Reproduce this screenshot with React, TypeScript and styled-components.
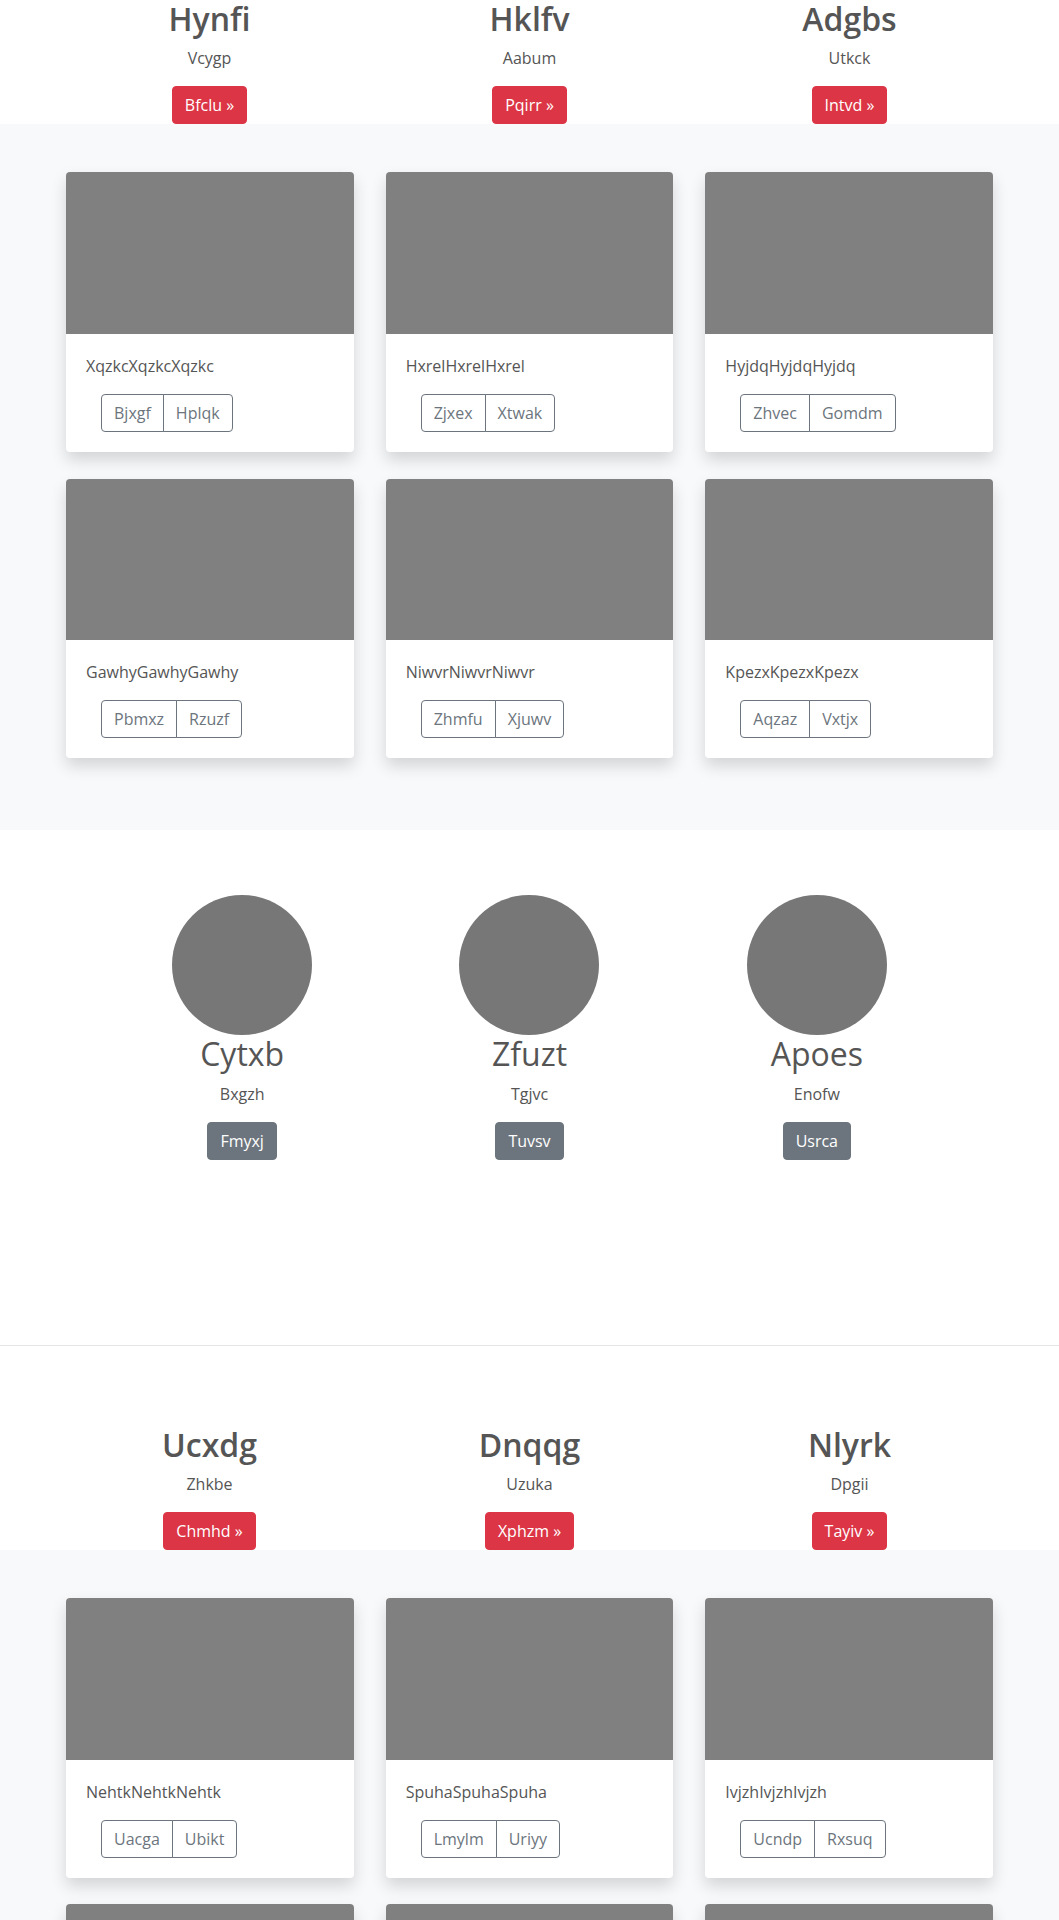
import React from "react";
import styled, { createGlobalStyle } from "styled-components";

const GlobalStyle = createGlobalStyle`
  html, body { margin: 0; padding: 0; background: #fff; }
  body {
    font-family: "Segoe UI", "Open Sans", "Noto Sans", sans-serif;
    font-size: 16px;
    line-height: 1.5;
    color: #555;
  }
  * { box-sizing: border-box; }
`;

const Container = styled.div<{ $width?: number }>`
  width: ${(p) => p.$width ?? 960}px;
  margin: 0 auto;
`;

const ThreeCols = styled.div<{ $gap?: number }>`
  display: grid;
  grid-template-columns: repeat(3, 1fr);
  column-gap: ${(p) => p.$gap ?? 0}px;
`;

const FeatureSection = styled.section<{ $top?: number }>`
  padding-top: ${(p) => p.$top ?? 0}px;
`;

const FeatureCol = styled.div`
  text-align: center;
`;

const FeatureTitle = styled.h2`
  margin: 0 0 8px;
  font-size: 32px;
  line-height: 1.2;
  font-weight: 600;
  color: #555;
`;

const Text = styled.p`
  margin: 0 0 16px;
  font-size: 16px;
  line-height: 24px;
  color: #555;
`;

const Button = styled.button<{ $variant: "danger" | "secondary" }>`
  display: inline-block;
  height: 38px;
  padding: 6px 12px;
  font-family: inherit;
  font-size: 16px;
  line-height: 24px;
  border-radius: 4px;
  border: 1px solid ${(p) => (p.$variant === "danger" ? "#dc3545" : "#6c757d")};
  background: ${(p) => (p.$variant === "danger" ? "#dc3545" : "#6c757d")};
  color: #fff;
  cursor: pointer;
  vertical-align: top;
`;

const Album = styled.section`
  background: #f8f9fa;
  padding: 48px 0 72px;
`;

const CardGrid = styled.div`
  display: grid;
  grid-template-columns: repeat(3, 1fr);
  column-gap: 32px;
  row-gap: 26.3px;
  padding: 0 16.5px;
`;

const Card = styled.div`
  background: #fff;
  border-radius: 4px;
  overflow: hidden;
  box-shadow: 0 8px 16px rgba(0, 0, 0, 0.15);
`;

const CardImage = styled.div`
  width: 100%;
  aspect-ratio: 16 / 9;
  background: #808080;
`;

const CardBody = styled.div`
  padding: 20px;
`;

const CardText = styled.p`
  margin: 0 0 16px;
  font-size: 16px;
  line-height: 24px;
  color: #555;
`;

const BtnGroup = styled.div`
  display: inline-flex;
  margin-left: 15px;
`;

const OutlineButton = styled.button`
  height: 38px;
  padding: 6px 12px;
  font-family: inherit;
  font-size: 16px;
  line-height: 24px;
  color: #6c757d;
  background: transparent;
  border: 1px solid #6c757d;
  cursor: pointer;
  &:first-child {
    border-radius: 4px 0 0 4px;
  }
  & + & {
    margin-left: -1px;
    border-radius: 0 4px 4px 0;
  }
`;

const Team = styled.section`
  padding: 65px 0 185px;
`;

const TeamCol = styled.div`
  display: flex;
  flex-direction: column;
  align-items: center;
  text-align: center;
`;

const Avatar = styled.div`
  width: 140px;
  height: 140px;
  border-radius: 50%;
  background: #777;
`;

const TeamName = styled.h2`
  margin: 0 0 8px;
  font-size: 32px;
  line-height: 1.2;
  font-weight: 400;
  color: #555;
`;

const Divider = styled.hr`
  margin: 0;
  border: 0;
  border-top: 1px solid rgba(0, 0, 0, 0.1);
`;

type Feature = { title: string; sub: string; btn: string };
type CardData = { text: string; a: string; b: string };

const features1: Feature[] = [
  { title: "Hynfi", sub: "Vcygp", btn: "Bfclu »" },
  { title: "Hklfv", sub: "Aabum", btn: "Pqirr »" },
  { title: "Adgbs", sub: "Utkck", btn: "Intvd »" },
];

const features2: Feature[] = [
  { title: "Ucxdg", sub: "Zhkbe", btn: "Chmhd »" },
  { title: "Dnqqg", sub: "Uzuka", btn: "Xphzm »" },
  { title: "Nlyrk", sub: "Dpgii", btn: "Tayiv »" },
];

const cards1: CardData[] = [
  { text: "XqzkcXqzkcXqzkc", a: "Bjxgf", b: "Hplqk" },
  { text: "HxrelHxrelHxrel", a: "Zjxex", b: "Xtwak" },
  { text: "HyjdqHyjdqHyjdq", a: "Zhvec", b: "Gomdm" },
  { text: "GawhyGawhyGawhy", a: "Pbmxz", b: "Rzuzf" },
  { text: "NiwvrNiwvrNiwvr", a: "Zhmfu", b: "Xjuwv" },
  { text: "KpezxKpezxKpezx", a: "Aqzaz", b: "Vxtjx" },
];

const cards2: CardData[] = [
  { text: "NehtkNehtkNehtk", a: "Uacga", b: "Ubikt" },
  { text: "SpuhaSpuhaSpuha", a: "Lmylm", b: "Uriyy" },
  { text: "IvjzhIvjzhIvjzh", a: "Ucndp", b: "Rxsuq" },
  { text: "WobreWobreWobre", a: "Kfuts", b: "Lqemo" },
  { text: "DaxinDaxinDaxin", a: "Pyvor", b: "Hiwse" },
  { text: "TumolTumolTumol", a: "Sgebn", b: "Ozrak" },
];

const team = [
  { name: "Cytxb", sub: "Bxgzh", btn: "Fmyxj" },
  { name: "Zfuzt", sub: "Tgjvc", btn: "Tuvsv" },
  { name: "Apoes", sub: "Enofw", btn: "Usrca" },
];

function Features({ items, top }: { items: Feature[]; top?: number }) {
  return (
    <FeatureSection $top={top}>
      <Container>
        <ThreeCols>
          {items.map((f) => (
            <FeatureCol key={f.title}>
              <FeatureTitle>{f.title}</FeatureTitle>
              <Text>{f.sub}</Text>
              <Button $variant="danger">{f.btn}</Button>
            </FeatureCol>
          ))}
        </ThreeCols>
      </Container>
    </FeatureSection>
  );
}

function Cards({ items }: { items: CardData[] }) {
  return (
    <Album>
      <Container>
        <CardGrid>
          {items.map((c) => (
            <Card key={c.text}>
              <CardImage />
              <CardBody>
                <CardText>{c.text}</CardText>
                <BtnGroup>
                  <OutlineButton>{c.a}</OutlineButton>
                  <OutlineButton>{c.b}</OutlineButton>
                </BtnGroup>
              </CardBody>
            </Card>
          ))}
        </CardGrid>
      </Container>
    </Album>
  );
}

export default function App() {
  return (
    <>
      <GlobalStyle />
      <Features items={features1} />
      <Cards items={cards1} />
      <Team>
        <Container $width={862}>
          <ThreeCols>
            {team.map((t) => (
              <TeamCol key={t.name}>
                <Avatar />
                <TeamName>{t.name}</TeamName>
                <Text>{t.sub}</Text>
                <Button $variant="secondary">{t.btn}</Button>
              </TeamCol>
            ))}
          </ThreeCols>
        </Container>
      </Team>
      <Divider />
      <Features items={features2} top={80} />
      <Cards items={cards2} />
    </>
  );
}
